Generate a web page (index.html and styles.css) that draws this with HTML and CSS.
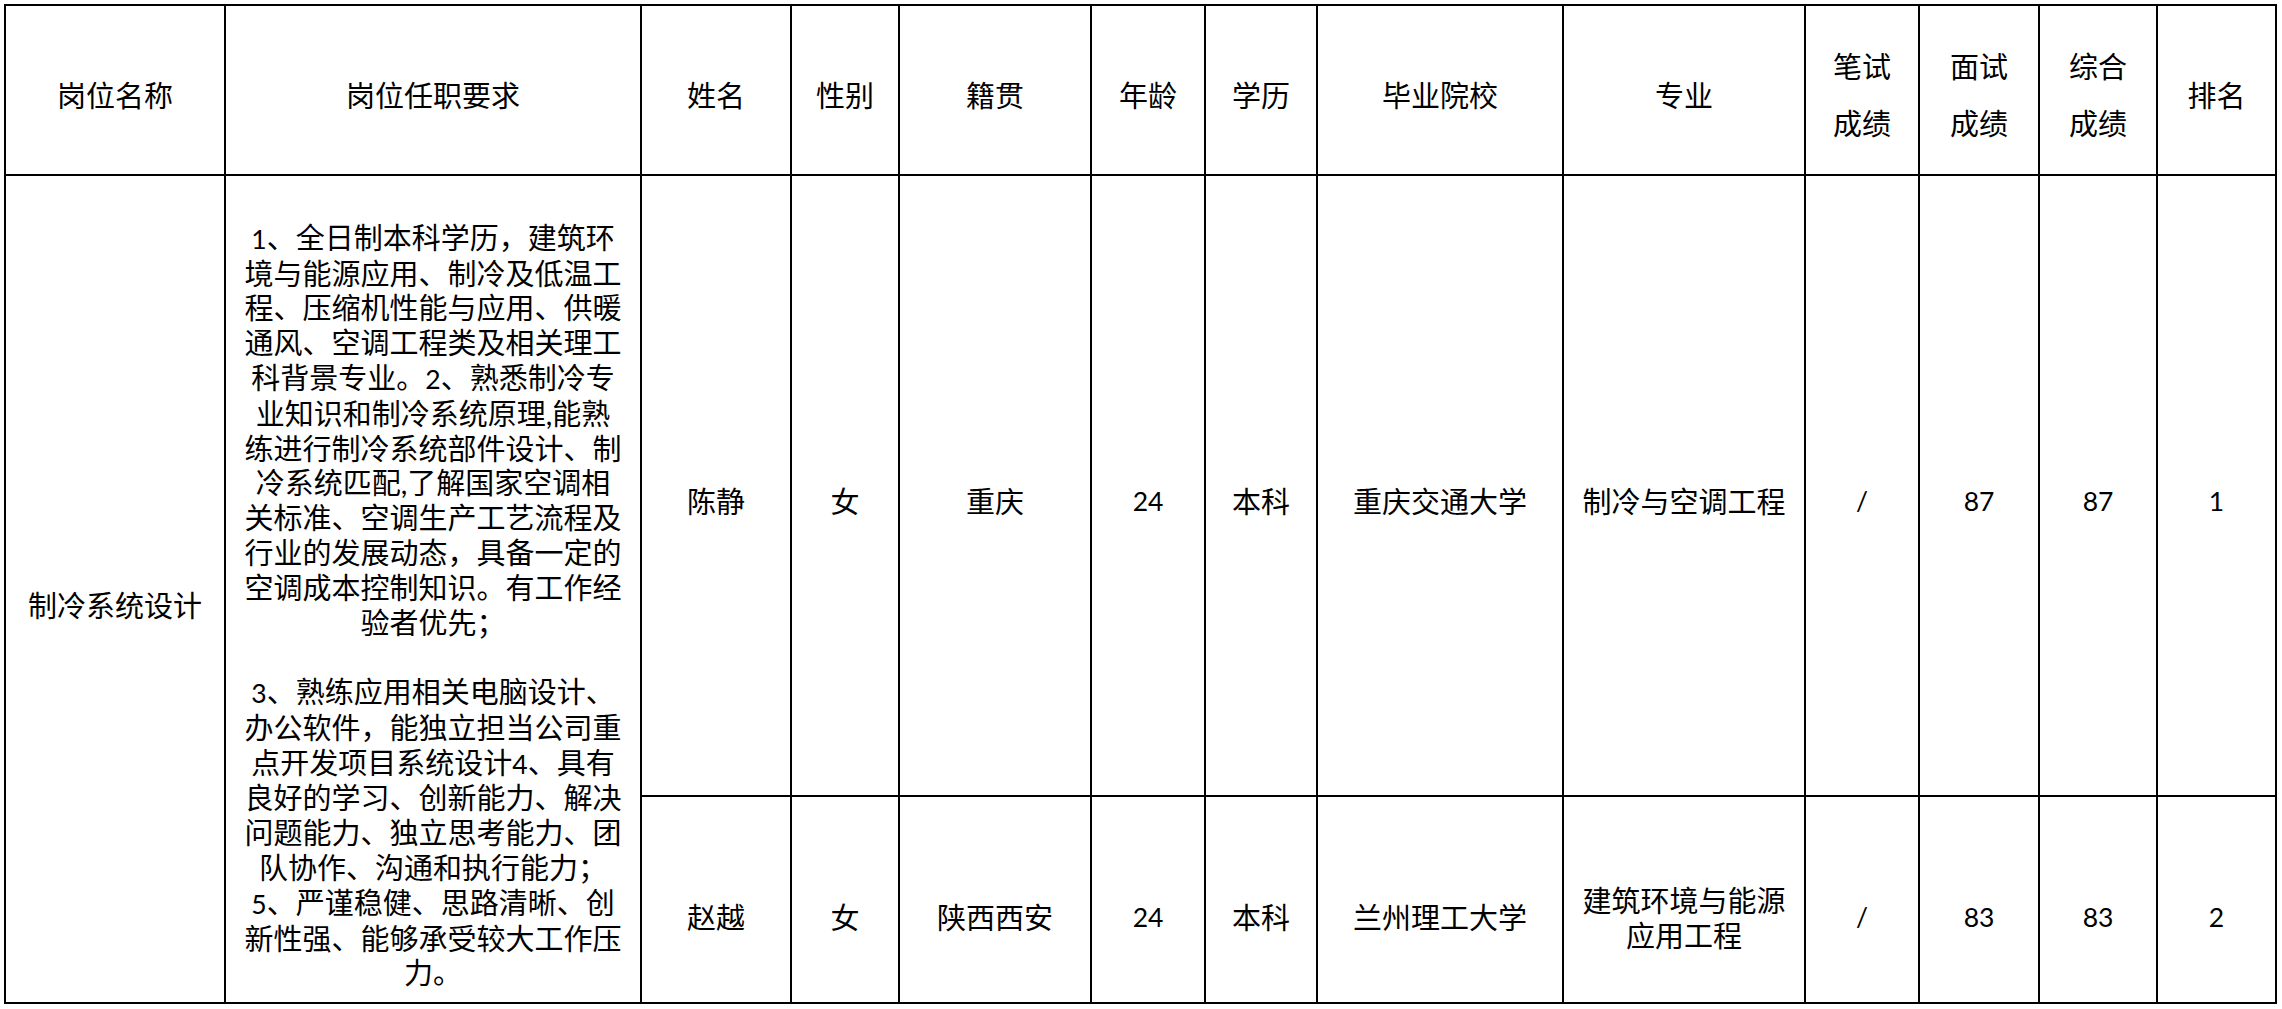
FILE: index.html
```html
<!DOCTYPE html>
<html lang="zh-CN">
<head>
<meta charset="utf-8">
<title>岗位成绩表</title>
<link rel="stylesheet" href="styles.css">
</head>
<body>
<div class="sheet" role="table">
  <div class="cell hd">岗位名称</div>
  <div class="cell hd">岗位任职要求</div>
  <div class="cell hd">姓名</div>
  <div class="cell hd">性别</div>
  <div class="cell hd">籍贯</div>
  <div class="cell hd">年龄</div>
  <div class="cell hd">学历</div>
  <div class="cell hd">毕业院校</div>
  <div class="cell hd">专业</div>
  <div class="cell hd"><div>笔试<br>成绩</div></div>
  <div class="cell hd"><div>面试<br>成绩</div></div>
  <div class="cell hd"><div>综合<br>成绩</div></div>
  <div class="cell hd">排名</div>

  <div class="cell span sp">制冷系统设计</div>
  <div class="cell span req"><div><span class="d">1</span>、全日制本科学历，建筑环<br>境与能源应用、制冷及低温工<br>程、压缩机性能与应用、供暖<br>通风、空调工程类及相关理工<br>科背景专业。<span class="d">2</span>、熟悉制冷专<br>业知识和制冷系统原理,能熟<br>练进行制冷系统部件设计、制<br>冷系统匹配,了解国家空调相<br>关标准、空调生产工艺流程及<br>行业的发展动态，具备一定的<br>空调成本控制知识。有工作经<br>验者优先；<br><br><span class="d">3</span>、熟练应用相关电脑设计、<br>办公软件，能独立担当公司重<br>点开发项目系统设计<span class="d">4</span>、具有<br>良好的学习、创新能力、解决<br>问题能力、独立思考能力、团<br>队协作、沟通和执行能力；<br><span class="d">5</span>、严谨稳健、思路清晰、创<br>新性强、能够承受较大工作压<br>力。</div></div>
  <div class="cell r1">陈静</div>
  <div class="cell r1">女</div>
  <div class="cell r1">重庆</div>
  <div class="cell r1 num">24</div>
  <div class="cell r1">本科</div>
  <div class="cell r1">重庆交通大学</div>
  <div class="cell r1">制冷与空调工程</div>
  <div class="cell r1 num">/</div>
  <div class="cell r1 num">87</div>
  <div class="cell r1 num">87</div>
  <div class="cell r1 num">1</div>

  <div class="cell r2">赵越</div>
  <div class="cell r2">女</div>
  <div class="cell r2">陕西西安</div>
  <div class="cell r2 num">24</div>
  <div class="cell r2">本科</div>
  <div class="cell r2">兰州理工大学</div>
  <div class="cell r2"><div>建筑环境与能源<br>应用工程</div></div>
  <div class="cell r2 num">/</div>
  <div class="cell r2 num">83</div>
  <div class="cell r2 num">83</div>
  <div class="cell r2 num">2</div>
</div>
</body>
</html>
```

FILE: styles.css
```css
html, body {
  margin: 0;
  padding: 0;
  background: #ffffff;
}

.sheet {
  display: grid;
  grid-template-columns: 220px 416px 150px 108px 192px 114px 112px 246px 242px 114px 120px 118px 119px;
  grid-template-rows: 170px 621px 207px;
  width: max-content;
  margin: 4px 0 0 4px;
  border-left: 2px solid #000;
  border-top: 2px solid #000;
  font-family: Lato, "Noto Sans CJK SC", sans-serif;
  font-size: 29px;
  color: #000;
}

.cell {
  box-sizing: border-box;
  border-right: 2px solid #000;
  border-bottom: 2px solid #000;
  display: flex;
  align-items: center;
  justify-content: center;
  text-align: center;
  white-space: nowrap;
}

.hd {
  padding-top: 10px;
  line-height: 57px;
}

.span {
  grid-row: span 2;
}

.sp {
  padding-top: 32px;
  line-height: 35px;
}

.req {
  padding-top: 34px;
  line-height: 34.8px;
}

.r1 {
  padding-top: 31px;
  line-height: 35px;
}

.r2 {
  padding-top: 36px;
  line-height: 35px;
}

.num {
  font-size: 26.5px;
}

.d {
  font-size: 26.5px;
}
```
